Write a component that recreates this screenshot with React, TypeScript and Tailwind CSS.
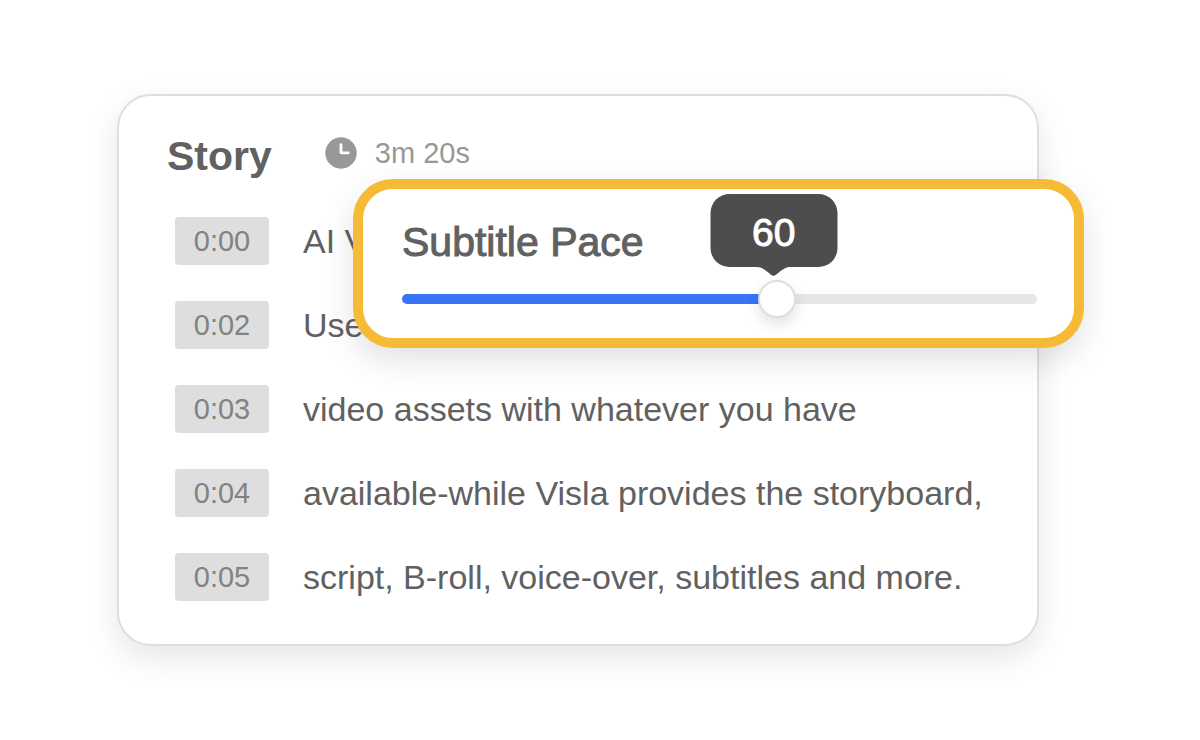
import { useState } from 'react'

type Line = {
  time: string
  text: string
}

const LINES: Line[] = [
  { time: '0:00', text: 'AI V' },
  { time: '0:02', text: 'Use' },
  { time: '0:03', text: 'video assets with whatever you have' },
  { time: '0:04', text: 'available-while Visla provides the storyboard,' },
  { time: '0:05', text: 'script, B-roll, voice-over, subtitles and more.' },
]

const MIN_PACE = 1
const MAX_PACE = 100

function ClockIcon() {
  return (
    <svg viewBox="0 0 32 32" className="size-8" aria-hidden="true">
      <circle cx="16" cy="16" r="15.7" fill="#989898" />
      <path
        d="M16 7.6V15.8H23.4"
        fill="none"
        stroke="#fff"
        strokeWidth="2.8"
        strokeLinecap="round"
        strokeLinejoin="round"
      />
    </svg>
  )
}

function PaceSlider() {
  const [pace, setPace] = useState(60)
  const ratio = (pace - MIN_PACE) / (MAX_PACE - MIN_PACE)

  return (
    <div className="absolute top-[83px] -right-[47px] left-[234px] rounded-[40px] border-10 border-[#f7ba37] bg-white pt-[31px] pr-[37px] pb-5 pl-[39px] shadow-[0_12px_32px_rgba(0,0,0,0.12)]">
      <label
        htmlFor="pace"
        className="block text-[41px] leading-[44px] font-medium text-[#616161] [-webkit-text-stroke:1px_#616161]"
      >
        Subtitle Pace
      </label>

      <div className="relative mt-4 flex h-[38px] items-center">
        <input
          id="pace"
          type="range"
          min={MIN_PACE}
          max={MAX_PACE}
          value={pace}
          onChange={(e) => setPace(Number(e.target.value))}
          style={{
            backgroundImage: `linear-gradient(to right, #3873f8 ${ratio * 100}%, #e6e6e6 ${ratio * 100}%)`,
          }}
          className="h-[10px] w-full cursor-pointer appearance-none rounded-full outline-none [&::-webkit-slider-thumb]:size-[38px] [&::-webkit-slider-thumb]:appearance-none [&::-webkit-slider-thumb]:rounded-full [&::-webkit-slider-thumb]:border-2 [&::-webkit-slider-thumb]:border-[#dedede] [&::-webkit-slider-thumb]:bg-white [&::-webkit-slider-thumb]:shadow-[0_6px_14px_rgba(0,0,0,0.12)]"
        />
        <output
          htmlFor="pace"
          style={{ left: `calc((100% - 38px) * ${ratio} + 16px)` }}
          className="absolute bottom-[51px] flex h-[73px] w-[127px] -translate-x-1/2 items-center justify-center rounded-[19px] bg-[#4d4d4d] pt-1 text-[39px] leading-[44px] font-medium text-white [-webkit-text-stroke:1px_#fff]"
        >
          {pace}
          <svg
            viewBox="0 0 34 10"
            className="absolute top-full left-1/2 -mt-px h-[10px] w-[34px] -translate-x-1/2"
            aria-hidden="true"
          >
            <path d="M0 0V1C5 1 8 3.500 14.500 8.800Q17 10.600 19.500 8.800C26 3.500 29 1 34 1V0Z" fill="#4d4d4d" />
          </svg>
        </output>
      </div>
    </div>
  )
}

export default function App() {
  return (
    <main className="bg-white pt-[94px] pr-[161px] pb-[94px] pl-[117px] font-['Liberation_Sans',Arial,sans-serif] antialiased">
      <section className="relative rounded-[34px] border-2 border-[#dedede] bg-white pt-9 pb-[43px] shadow-[0_12px_32px_rgba(0,0,0,0.1)]">
        <header className="flex items-start pl-12">
          <h1 className="text-[41px] leading-[48px] font-bold text-[#616161]">Story</h1>
          <div className="ml-[53px] flex items-center gap-[18px]">
            <ClockIcon />
            <span className="text-[29px] leading-[42px] font-medium text-[#989898]">3m 20s</span>
          </div>
        </header>

        <ul className="mt-[37px] flex flex-col gap-9 pl-14">
          {LINES.map((line) => (
            <li key={line.time} className="flex items-center gap-[34px]">
              <time className="flex h-12 w-[94px] items-center justify-center rounded-sm bg-[#dedede] text-[29px] leading-[44px] font-medium text-[#828282]">
                {line.time}
              </time>
              <span className="text-[34px] leading-[44px] whitespace-nowrap text-[#616161]">{line.text}</span>
            </li>
          ))}
        </ul>

        <PaceSlider />
      </section>
    </main>
  )
}
